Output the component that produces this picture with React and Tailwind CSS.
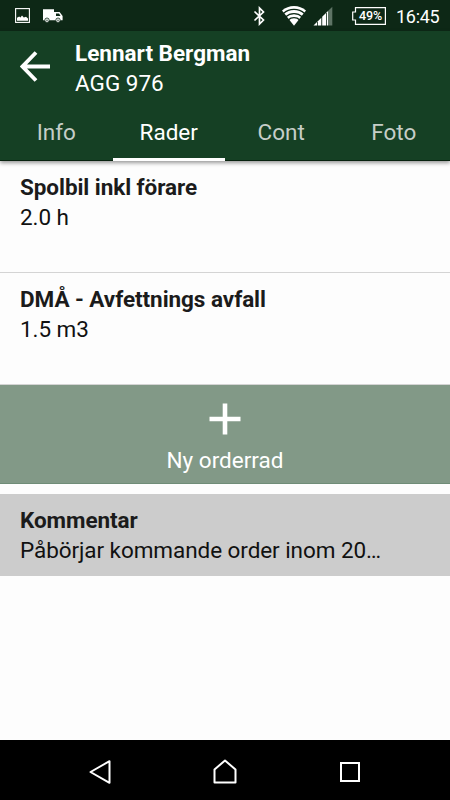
import React from 'react';

const tabs = ['Info', 'Rader', 'Cont', 'Foto'];

const rows = [
  { id: 1, name: 'Spolbil inkl förare', amount: '2.0 h' },
  { id: 2, name: 'DMÅ - Avfettnings avfall', amount: '1.5 m3' },
];

function StatusBar() {
  return (
    <div className="h-[31px] bg-[#0d2816] flex items-center justify-between pl-[15px] pr-[10px]">
      <div className="flex items-center gap-[13px]">
        <svg width="15" height="15" viewBox="0 0 15 15">
          <rect x="0.6" y="0.6" width="13.8" height="13.8" fill="none" stroke="#fff" strokeWidth="1.1" />
          <path d="M2 12.8V9.8L4.2 8.6L5.4 9.4L7 7.4L8.8 9.4L11 8.8L13 10.4V12.8Z" fill="#fff" />
        </svg>
        {/* delivery truck */}
        <svg width="20" height="14" viewBox="0 0 20 14">
          <path
            fillRule="evenodd"
            d="M0 0.3H11V3H16.6L19.6 7V11.2H0ZM13 4.6V7H17.6L16 4.6Z"
            fill="#fff"
          />
          <circle cx="4" cy="11.2" r="2.2" fill="#fff" stroke="#0d2816" strokeWidth="0.8" />
          <circle cx="15" cy="11.2" r="2.2" fill="#fff" stroke="#0d2816" strokeWidth="0.8" />
          <circle cx="4" cy="11.2" r="0.7" fill="#0d2816" />
          <circle cx="15" cy="11.2" r="0.7" fill="#0d2816" />
        </svg>
      </div>

      <div className="flex items-center">
        <svg className="mr-[16px]" width="12" height="20" viewBox="0 0 12 20">
          <path d="M1.5 5.5L10.5 14L6.5 18V2L10.5 6L1.5 14.5" fill="none" stroke="#fff" strokeWidth="1.7" />
        </svg>
        <svg className="mr-[6px]" width="26" height="21" viewBox="0 0 26 21">
          <path d="M13 20.7L1 5.6A18 18 0 0 1 25 5.6Z" fill="#fff" />
          <g fill="none" stroke="#0d2816" strokeWidth="1.3">
            <path d="M2.4 8.4A16 16 0 0 1 23.6 8.4" />
            <path d="M4.8 11.8A12 12 0 0 1 21.2 11.8" />
            <path d="M7.2 15A8.5 8.5 0 0 1 18.8 15" />
          </g>
        </svg>
        <svg className="mr-[19px]" width="20" height="20" viewBox="0 0 20 20">
          <g fill="#fff">
            <path d="M0.5 19.5L4 16V19.5Z" />
            <path d="M4.8 15.2L8.3 11.7V19.5H4.8Z" />
            <path d="M9.2 10.8L13 7V19.5H9.2Z" />
            <path d="M13.8 6.2L15 5V19.5H13.8Z" />
          </g>
          <path d="M15 5L19.3 0.7V19.5H15Z" fill="#5e7465" />
        </svg>
        <div className="relative mr-[10px]">
          <svg width="34" height="18" viewBox="0 0 34 18">
            <path d="M3.5 0.6H33.4V17.4H3.5V13H0.7V5H3.5Z" fill="none" stroke="#fff" strokeWidth="1.2" />
          </svg>
          <span className="absolute inset-0 pl-[3px] text-center text-[12.5px] leading-[18px] font-medium tracking-[-0.2px]">49%</span>
        </div>
        <span className="w-[44px] text-[18px] leading-[30px] pt-[2px] tracking-[-0.3px]">16:45</span>
      </div>
    </div>
  );
}

function Header() {
  return (
    <header className="relative z-10 h-[130px] bg-[#154024] border-b border-[#08220f] shadow-[0_2px_4px_rgba(0,0,0,0.4)]">
      <div className="h-[73px] flex pt-[7px]">
        <svg className="ml-[20px] mt-[13px] mr-[24px]" width="31" height="31" viewBox="0 0 31 31">
          <path d="M30 15.5H3M16 1.5L2.5 15.5L16 29.5" fill="none" stroke="#fff" strokeWidth="3.8" />
        </svg>
        <div className="leading-[30px]">
          <h1 className="font-bold">Lennart Bergman</h1>
          <p>AGG 976</p>
        </div>
      </div>
      <nav className="grid grid-cols-4 h-[57px]">
        {tabs.map((tab) => (
          <button
            key={tab}
            className={
              tab === 'Rader'
                ? 'h-[57px] pt-[13px] leading-[30px] flex justify-center border-b-[3px] border-white'
                : 'h-[57px] pt-[13px] leading-[30px] flex justify-center text-[#c6cec8]'
            }
          >
            {tab}
          </button>
        ))}
      </nav>
    </header>
  );
}

export default function App() {
  return (
    <div className="w-[450px] h-[800px] flex flex-col overflow-hidden bg-[#fdfdfd] font-[Roboto,sans-serif] text-[22.5px] text-white">
      <StatusBar />
      <Header />

      <main className="flex-1 text-[#111] tracking-[-0.07px]">
        {rows.map((row) => (
          <div key={row.id} className="h-[112px] pt-[11px] pl-[20px] leading-[30px] border-b border-[#d4d4d4]">
            <h2 className="font-bold text-[#1b1b1b]">{row.name}</h2>
            <p>{row.amount}</p>
          </div>
        ))}

        <button className="w-full h-[99px] bg-[#829987] text-white flex flex-col items-center border-b border-[#6f8c77]">
          <svg className="mt-[18px]" width="32" height="32" viewBox="0 0 32 32">
            <path d="M16 0.5V31.5M0.5 16H31.5" stroke="#fff" strokeWidth="4.6" />
          </svg>
          <span className="mt-[10px] leading-[30px] tracking-normal">Ny orderrad</span>
        </button>

        <section className="mt-[10px] h-[82px] bg-[#ccc] pt-[11px] px-[20px] leading-[30px]">
          <h2 className="font-bold text-[#1b1b1b]">Kommentar</h2>
          <p>Påbörjar kommande order inom 20…</p>
        </section>
      </main>

      <footer className="h-[60px] bg-black flex items-center">
        <svg className="ml-[88px] mt-[3px]" width="24" height="26" viewBox="0 0 24 26">
          <path d="M21.5 2.2V23.8L2.5 13Z" fill="none" stroke="#fff" strokeWidth="2" strokeLinejoin="round" />
        </svg>
        <svg className="ml-[100px] mt-[3px]" width="26" height="26" viewBox="0 0 26 26">
          <path d="M2.5 23.5V10.5L13 1.5L23.5 10.5V23.5Z" fill="none" stroke="#fff" strokeWidth="2" strokeLinejoin="round" />
        </svg>
        <svg className="ml-[101px] mt-[4px]" width="22" height="22" viewBox="0 0 22 22">
          <rect x="2" y="2" width="18" height="18" fill="none" stroke="#fff" strokeWidth="2" />
        </svg>
      </footer>
    </div>
  );
}
